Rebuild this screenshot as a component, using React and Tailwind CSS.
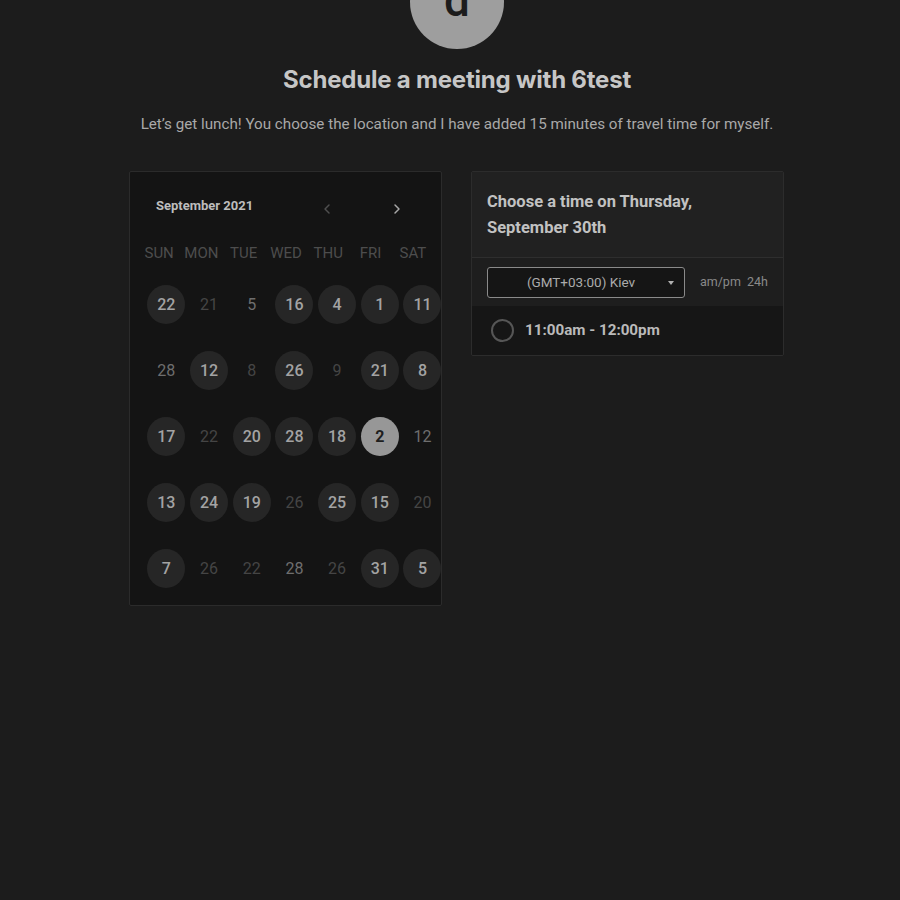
import { ChevronLeft, ChevronRight } from 'lucide-react';

// c = circled (available), m = mid-tone text, d = dim
const weeks = [
  [['22', 'c'], ['21', 'd'], ['5', 'm'], ['16', 'c'], ['4', 'c'], ['1', 'c'], ['11', 'c']],
  [['28', 'm'], ['12', 'c'], ['8', 'd'], ['26', 'c'], ['9', 'd'], ['21', 'c'], ['8', 'c']],
  [['17', 'c'], ['22', 'd'], ['20', 'c'], ['28', 'c'], ['18', 'c'], ['2', 's'], ['12', 'm']],
  [['13', 'c'], ['24', 'c'], ['19', 'c'], ['26', 'd'], ['25', 'c'], ['15', 'c'], ['20', 'd']],
  [['7', 'c'], ['26', 'd'], ['22', 'd'], ['28', 'm'], ['26', 'd'], ['31', 'c'], ['5', 'c']],
];

const dayNames = ['SUN', 'MON', 'TUE', 'WED', 'THU', 'FRI', 'SAT'];

function Day({ label, kind }) {
  if (kind === 's') {
    return (
      <div className="w-[38px] h-[39px] rounded-[50%] bg-[#979797] flex items-center justify-center text-[16px] font-bold text-[#1e1e1e]">
        {label}
      </div>
    );
  }
  if (kind === 'c') {
    return (
      <div className="w-[38px] h-[39px] rounded-[50%] bg-[#262626] flex items-center justify-center text-[16px] font-medium text-[#a3a3a3]">
        {label}
      </div>
    );
  }
  return (
    <div
      className={
        'w-[38px] h-[39px] flex items-center justify-center text-[16px] ' +
        (kind === 'm' ? 'text-[#6e6e6e]' : 'text-[#454545]')
      }
    >
      {label}
    </div>
  );
}

function Calendar() {
  return (
    <div className="w-[313px] h-[435px] border border-[#2b2b2b] rounded-[2px] bg-[#141414] overflow-hidden">
      <div className="flex items-center h-[34px] mt-[17px] pl-[26px]">
        <span className="text-[13px] font-bold text-[#bdbdbd]">September 2021</span>
        <ChevronLeft className="w-[16px] h-[16px] text-[#4f4f4f] ml-[66px] mt-[6px]" strokeWidth={2.2} />
        <ChevronRight className="w-[16px] h-[16px] text-[#a8a8a8] ml-[54px] mt-[6px]" strokeWidth={2.2} />
      </div>
      <div className="grid grid-cols-7 w-[296px] ml-[8px] mt-[20px]">
        {dayNames.map((d) => (
          <div key={d} className="text-center text-[15px] text-[#4d4d4d] leading-[20px]">
            {d}
          </div>
        ))}
      </div>
      <div className="flex flex-col gap-[27px] ml-[15px] mt-[22px]">
        {weeks.map((week, i) => (
          <div key={i} className="grid grid-cols-[repeat(7,42.7px)]">
            {week.map(([label, kind], j) => (
              <div key={j} className="flex justify-center">
                <Day label={label} kind={kind} />
              </div>
            ))}
          </div>
        ))}
      </div>
    </div>
  );
}

function TimePanel() {
  return (
    <div className="w-[313px] border border-[#2c2c2c] rounded-[2px] overflow-hidden">
      <div className="bg-[#212121] px-[15px] pt-[17px] pb-[16px] border-b border-[#2e2e2e]">
        <h2 className="text-[16.5px] font-bold leading-[26px] text-[#c2c2c2]">
          Choose a time on Thursday,
          <br />
          September 30th
        </h2>
      </div>
      <div className="bg-[#1e1e1e] h-[48px] flex items-center px-[15px]">
        <div className="w-[199px] h-[31px] border border-[#8a8a8a] rounded-[3px] bg-[#151515] flex items-center relative">
          <span className="flex-1 text-center text-[13.5px] text-[#ababab] pr-[14px] pl-[4px]">(GMT+03:00) Kiev</span>
          <span className="absolute right-[10px] top-[13px] w-0 h-0 border-l-[3.5px] border-r-[3.5px] border-t-[4px] border-l-transparent border-r-transparent border-t-[#b0b0b0]" />
        </div>
        <span className="ml-[15px] text-[12.5px] text-[#8a8a8a] whitespace-pre">am/pm  24h</span>
      </div>
      <div className="bg-[#161616] h-[49px] flex items-center pl-[19px]">
        <span className="w-[23px] h-[23px] rounded-full border-2 border-[#565656]" />
        <span className="ml-[11px] text-[15.2px] font-bold text-[#bababa]">11:00am - 12:00pm</span>
      </div>
    </div>
  );
}

export default function App() {
  return (
    <div className="min-h-[900px] bg-[#1c1c1c] flex flex-col items-center overflow-hidden pl-[14px] font-['Roboto',sans-serif]">
      <div className="w-[94px] h-[94px] -mt-[45px] rounded-full bg-[#9e9e9e] flex items-center justify-center shrink-0">
        <span className="text-[46px] font-medium text-[#1c1c1c] leading-none mt-[-4px]">d</span>
      </div>
      <h1 className="mt-[15px] text-[24px] leading-[32px] font-bold text-[#c6c6c6] font-['Inter',sans-serif] tracking-[-0.2px]">
        Schedule a meeting with 6test
      </h1>
      <p className="mt-[17px] text-[15.2px] leading-[22px] text-[#a9a9a9]">
        Let’s get lunch! You choose the location and I have added 15 minutes of travel time for myself.
      </p>
      <div className="flex items-start gap-[29px] mt-[36px] mr-[1px]">
        <Calendar />
        <TimePanel />
      </div>
    </div>
  );
}
